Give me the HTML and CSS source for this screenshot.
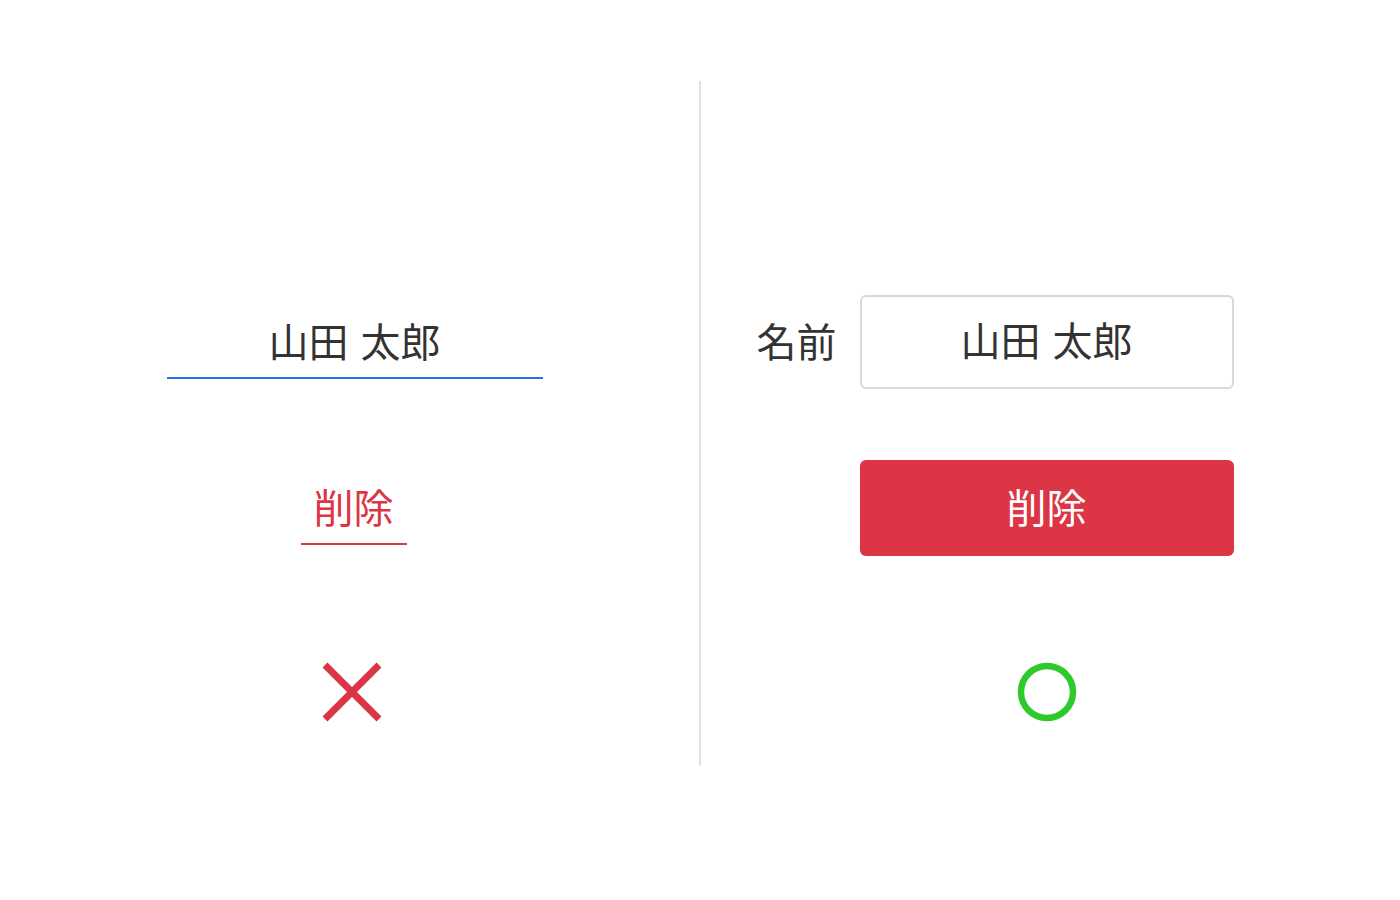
FILE: index.html
```html
<!DOCTYPE html>
<html lang="ja">
<head>
    <meta charset="UTF-8">
    <meta name="viewport" content="width=device-width, initial-scale=1.0">
    <title>ラベルとボタンの比較</title>
    <link rel="stylesheet" href="styles.css">
</head>
<body>
    <div class="compare">
        <div class="column bad">
            <div class="row">
                <input class="line-input" type="text" value="山田 太郎">
            </div>
            <div class="row">
                <button class="text-button">削除</button>
            </div>
            <div class="row icon-row">
                <svg class="mark-x" width="60" height="60" viewBox="0 0 60 60">
                    <path d="M3 3 L57 57 M57 3 L3 57" stroke="#dc3545" stroke-width="7" fill="none"/>
                </svg>
            </div>
        </div>

        <div class="divider"></div>

        <div class="column good">
            <div class="row field">
                <label for="name">名前</label>
                <input class="box-input" id="name" type="text" value="山田 太郎">
            </div>
            <div class="row field">
                <button class="solid-button">削除</button>
            </div>
            <div class="row icon-row">
                <svg width="60" height="60" viewBox="0 0 60 60">
                    <circle cx="30" cy="30" r="26" stroke="#2ec92a" stroke-width="6.5" fill="none"/>
                </svg>
            </div>
        </div>
    </div>
</body>
</html>
```

FILE: styles.css
```css
body {
    margin: 8px;
    background: #fff;
    font-family: "Noto Sans CJK JP", "Noto Sans", sans-serif;
    color: #333;
}
.compare {
    display: flex;
    margin-top: 73px;
}
.column {
    flex: 1;
    display: flex;
    flex-direction: column;
    padding: 214px 0 44px;
}
.divider {
    width: 2px;
    background: #e2e2e2;
}
.row {
    display: flex;
    justify-content: center;
    align-items: flex-start;
    height: 94px;
}
.row + .row {
    margin-top: 71px;
    height: 96px;
}
.row.icon-row {
    margin-top: 106px;
    height: 60px;
}

/* left: bad example */
.line-input {
    width: 376px;
    height: 84px;
    box-sizing: border-box;
    padding: 8px 0 0;
    margin-left: 2px;
    border: none;
    border-bottom: 2px solid #2b6de8;
    font: inherit;
    font-size: 40px;
    word-spacing: 3px;
    color: #333;
    text-align: center;
    outline: none;
    background: transparent;
}
.text-button {
    box-sizing: border-box;
    width: 106px;
    height: 85px;
    padding: 8px 0 0;
    border: none;
    border-bottom: 2px solid #dc3545;
    background: transparent;
    font: inherit;
    font-size: 40px;
    line-height: 40px;
    color: #dc3545;
    cursor: pointer;
}
.mark-x {
    margin-right: 4px;
}

/* right: good example */
.field {
    display: grid;
    grid-template-columns: 1fr 374px 1fr;
}
.field label {
    grid-column: 1;
    justify-self: end;
    align-self: center;
    margin: 0 23px 4px 0;
    font-size: 40px;
    line-height: 1;
    color: #333;
}
.box-input {
    grid-column: 2;
    width: 100%;
    height: 94px;
    box-sizing: border-box;
    padding: 0 0 6px;
    border: 2px solid #d8d8d8;
    border-radius: 6px;
    font: inherit;
    font-size: 40px;
    word-spacing: 3px;
    color: #333;
    text-align: center;
    outline: none;
}
.solid-button {
    grid-column: 2;
    height: 96px;
    padding: 0 0 4px;
    border: none;
    border-radius: 6px;
    background: #dc3545;
    color: #fff;
    font: inherit;
    font-size: 40px;
    cursor: pointer;
}
```
